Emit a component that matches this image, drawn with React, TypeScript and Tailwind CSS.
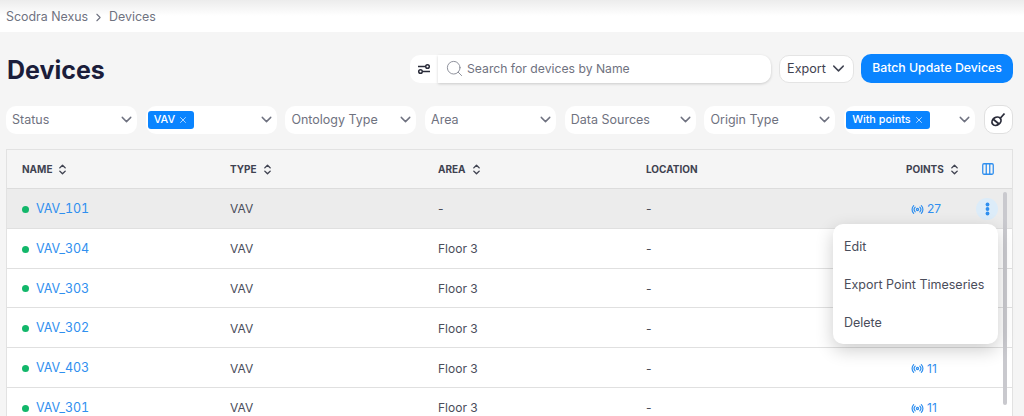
import { ChevronDown, ChevronRight, ChevronsUpDown, Columns3, Radio, Search, X } from "lucide-react";

// points of the three rows under the open menu are hidden by it
const rows = [
  { name: "VAV_101", area: "-", points: "27", active: true },
  { name: "VAV_304", area: "Floor 3" },
  { name: "VAV_303", area: "Floor 3" },
  { name: "VAV_302", area: "Floor 3" },
  { name: "VAV_403", area: "Floor 3", points: "11" },
  { name: "VAV_301", area: "Floor 3", points: "11" },
];

const Select = ({ label, tag }: { label?: string; tag?: string }) => (
  <div className={`flex h-[28px] w-[131px] items-center justify-between rounded-[10px] bg-white pr-[2px] ${tag ? "pl-[2px]" : "pl-[6px]"}`}>
    {tag ? (
      <span className="flex h-[18px] items-center gap-[3px] rounded-[3px] bg-[#0a84ff] px-[6px] pt-[1px] text-[10.8px] font-medium text-white">
        {tag}
        <X size={10} className="text-[#cfe6ff]" />
      </span>
    ) : (
      <span className="pt-[1px] text-[12.5px] text-[#6f7280]">{label}</span>
    )}
    <ChevronDown size={17} className="text-[#6f7280]" />
  </div>
);

const Head = ({ label, sort = true }: { label: string; sort?: boolean }) => (
  <div className="flex items-center gap-[4px] text-[10px] font-bold text-[#3f4250]">
    {label}
    {sort && <ChevronsUpDown size={13} strokeWidth={2.6} />}
  </div>
);

export default function App() {
  return (
    <div className="relative h-[416px] w-[1024px] overflow-hidden bg-[#f5f5f5] font-['Inter',sans-serif]">
      {/* Breadcrumb */}
      <div className="flex h-[32px] items-center gap-[4px] bg-gradient-to-b from-[#ececec] via-white to-white pl-[6px] pt-[2px] text-[12.4px] text-[#6f7280]">
        Scodra Nexus
        <ChevronRight size={13} />
        Devices
      </div>

      {/* Title and actions */}
      <div className="flex h-[51px] items-end justify-between pl-[7px] pr-[11px]">
        <h1 className="mb-[-6px] text-[25px] leading-[38px] font-bold text-[#1b1d3a]">Devices</h1>
        <div className="flex items-center">
          <div className="flex h-[28px] w-[28px] items-center justify-center rounded-l-[10px] bg-white">
            <svg width="14" height="12" viewBox="0 0 14 12" fill="none" stroke="#2a2c3a" strokeWidth="1.5">
              <path d="M1 3.5h7" />
              <circle cx="10.5" cy="3.5" r="1.8" />
              <path d="M13 8.5H6" />
              <circle cx="3.5" cy="8.5" r="1.8" />
            </svg>
          </div>
          <div className="flex h-[28px] w-[333px] items-center gap-[3px] rounded-r-[10px] bg-white pl-[7px] text-[12.2px] text-[#6f7280] shadow-[0_1px_3px_rgba(0,0,0,0.18)]">
            <Search size={19} strokeWidth={1.2} className="text-[#8a8d98]" />
            <span className="pt-[1px]">Search for devices by Name</span>
          </div>
          <div className="ml-[8px] flex h-[28px] w-[75px] items-center justify-center gap-[3px] rounded-[10px] border border-[#e4e4e4] bg-white pl-[2px] text-[12.6px] text-[#3f4250]">
            <span className="pt-[1px]">Export</span>
            <ChevronDown size={19} strokeWidth={1.8} />
          </div>
          <div className="ml-[7px] flex h-[29px] w-[152px] items-center justify-center rounded-[10px] bg-[#0a84ff] text-[12.3px] font-medium text-white">
            Batch Update Devices
          </div>
        </div>
      </div>

      {/* Filters */}
      <div className="mt-[22px] flex items-center gap-[8.7px] pl-[6px]">
        <Select label="Status" />
        <Select tag="VAV" />
        <Select label="Ontology Type" />
        <Select label="Area" />
        <Select label="Data Sources" />
        <Select label="Origin Type" />
        <Select tag="With points" />
        <div className="flex h-[29px] w-[29px] items-center justify-center rounded-[10px] border border-[#e0e0e0] bg-white">
          <svg width="16" height="16" viewBox="0 0 16 16" fill="none" stroke="#2a2c3a" strokeWidth="1.8">
            <path d="M14.5 1.5 10.5 6" />
            <ellipse cx="6.5" cy="9.2" rx="4.8" ry="3.8" transform="rotate(-35 6.5 9.2)" />
            <path d="M3.2 7.2 9 12" />
          </svg>
        </div>
      </div>

      {/* Table */}
      <div className="ml-[6px] mr-[11px] mt-[15px] border-x border-t border-[#e2e2e2]">
        <div className="grid h-[39px] grid-cols-[208px_208px_208px_260px_1fr] items-center border-b border-[#dcdcdc] pl-[15px]">
          <Head label="NAME" />
          <Head label="TYPE" />
          <Head label="AREA" />
          <Head label="LOCATION" sort={false} />
          <div className="flex items-center">
            <Head label="POINTS" />
            <Columns3 size={14} strokeWidth={2.2} className="ml-[20px] text-[#2f8fef]" />
          </div>
        </div>
        {rows.map((row) => (
          <div
            key={row.name}
            className={`grid h-[39.8px] grid-cols-[208px_208px_208px_260px_1fr] items-center border-b border-[#e0e0e0] pl-[15px] pt-[2px] text-[12px] text-[#4a4d5a] ${
              row.active ? "bg-[#ececec]" : "bg-white"
            }`}
          >
            <div className="flex items-center gap-[7px]">
              <span className="h-[7px] w-[7px] rounded-full bg-[#12b76a]" />
              <span className="text-[12.5px] text-[#2f8fef] tabular-nums">{row.name}</span>
            </div>
            <span>VAV</span>
            <span>{row.area}</span>
            <span>-</span>
            {row.points && (
              <div className="flex items-center gap-[3px] pl-[5px] text-[#2f8fef]">
                <Radio size={13} strokeWidth={2.2} />
                {row.points}
                {row.active && (
                  <span className="ml-[32px] flex h-[22px] w-[22px] items-center justify-center rounded-full bg-[#dcecf9]">
                    <svg width="5" height="14" viewBox="0 0 5 14" fill="#2f8fef">
                      <circle cx="2.5" cy="2.5" r="1.9" />
                      <circle cx="2.5" cy="7" r="1.9" />
                      <circle cx="2.5" cy="11.5" r="1.9" />
                    </svg>
                  </span>
                )}
              </div>
            )}
          </div>
        ))}
      </div>

      {/* Scrollbar */}
      <div className="absolute top-[192px] left-[1003px] h-[213px] w-[4px] rounded-full bg-[#c9c9ce]" />

      {/* Row menu */}
      <div className="absolute top-[224px] left-[833px] flex h-[120px] w-[165px] flex-col justify-around rounded-[10px] bg-white px-[11px] pt-[5px] pb-[2px] text-[12.5px] text-[#4a4d5a] shadow-[0_6px_18px_rgba(0,0,0,0.2)]">
        <span>Edit</span>
        <span>Export Point Timeseries</span>
        <span>Delete</span>
      </div>
    </div>
  );
}
